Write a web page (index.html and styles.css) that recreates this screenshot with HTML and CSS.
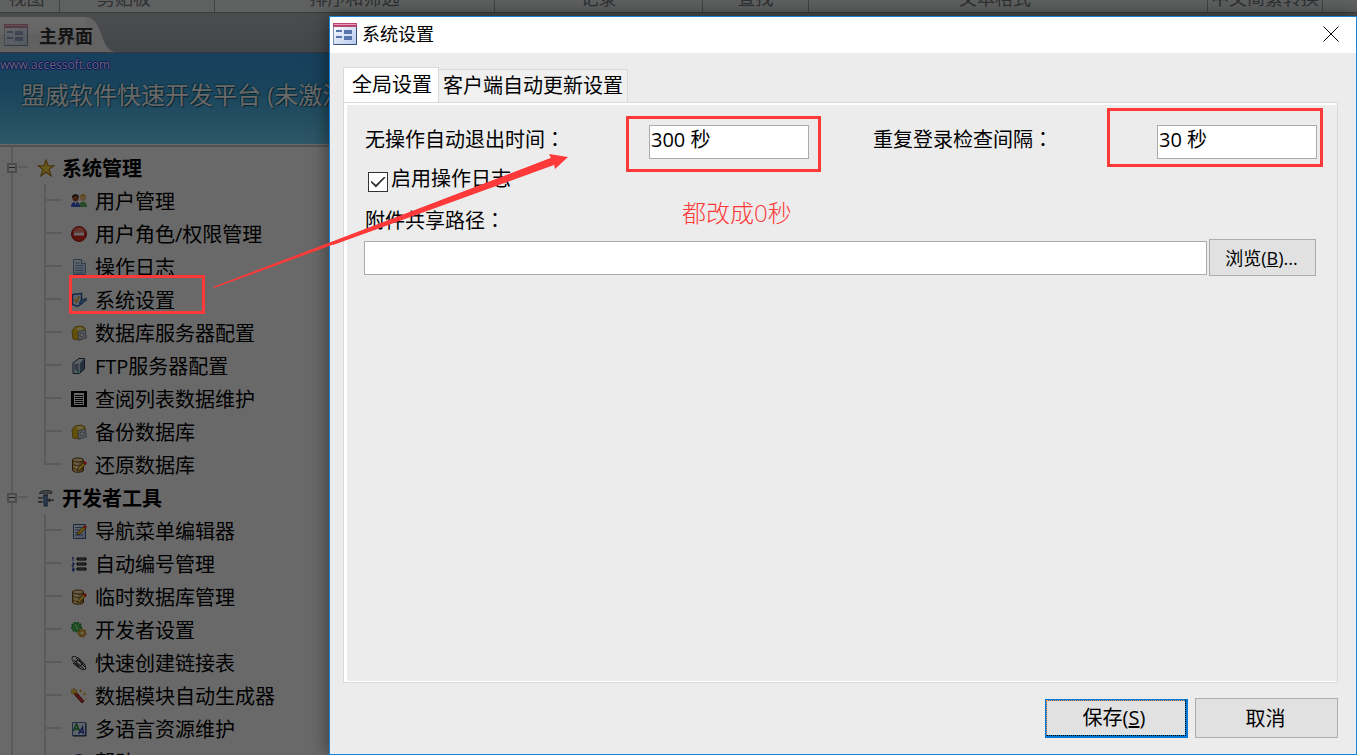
FILE: index.html
```
<!DOCTYPE html>
<html lang="zh-CN">
  <head>
    <meta charset="UTF-8" />
    <title>系统设置</title>
    <link rel="stylesheet" href="styles.css" />
  </head>
  <body>
    <!-- shared icons -->
    <svg class="defs" width="0" height="0" aria-hidden="true">
      <linearGradient id="paper" x1="0" y1="0" x2="1" y2="1">
        <stop offset="0" stop-color="#fff" />
        <stop offset="1" stop-color="#b4c8ee" />
      </linearGradient>
      <linearGradient id="gold" x1="0" y1="0" x2="1" y2="0">
        <stop offset="0" stop-color="#f0c05a" />
        <stop offset="0.4" stop-color="#ffeebb" />
        <stop offset="1" stop-color="#a87020" />
      </linearGradient>
      <symbol id="form" viewBox="0 0 24 22">
        <rect x="0.5" y="0.5" width="23" height="21" fill="url(#paper)" stroke="#7d8fb0" />
        <path d="M0 0h24v4H0z" fill="#b8456f" />
        <path d="M1 1h22v1H1z" fill="#e59ab5" />
        <path d="M23.5 4v17.500H1" fill="none" stroke="#39506f" />
        <path d="M3 8h6M3 14h6" stroke="#5874ad" stroke-width="2" />
        <path d="M12 8h6v2h-6zM12 14h6v2h-6z" fill="#dbe6fb" stroke="#5874ad" stroke-width="2" />
      </symbol>
      <symbol id="backup" viewBox="0 0 16 16">
        <path d="M1 6l3-4 6-1 4 2v9l-5 3-7-1z" fill="#f0c419" stroke="#a9851b" />
        <path d="M4 3l6-1 3 2-5 2z" fill="#fff2a0" />
        <path d="M7 7l7-2 1.500 8-8 2z" fill="#d5dbe2" stroke="#7f8a96" />
        <circle cx="11" cy="10" r="2" fill="#fff" stroke="#7f8a96" />
      </symbol>
      <symbol id="restore" viewBox="0 0 16 16">
        <path d="M1.500 3v10c0 3 11 3 11 0V3z" fill="url(#gold)" stroke="#6b4512" />
        <ellipse cx="7" cy="3" rx="5.500" ry="2" fill="#fbe3a5" stroke="#6b4512" />
        <path d="M2 7c2 2 8 2 10 0M2 11c2 2 8 2 10 0" fill="none" stroke="#8b6427" />
        <path d="M6 14l1-3 6-6 2 2-6 6z" fill="#ffd23c" stroke="#604010" stroke-width="0.700" />
        <path d="M12 6l2-2 2 2-2 2z" fill="#f02020" />
      </symbol>
    </svg>

    <div class="app">
      <div class="ribbon">
        <span class="group view">视图</span>
        <span class="group clipboard">剪贴板</span>
        <span class="group">排序和筛选</span>
        <span class="group">记录</span>
        <span class="group">查找</span>
        <span class="group format">文本格式</span>
        <span class="group">中文简繁转换</span>
        <span class="group"></span>
      </div>

      <div class="doc-tabs">
        <a class="doc-tab" href="#main">
          <svg class="form-icon" width="24" height="24"><use href="#form" /></svg>
          主界面
        </a>
        <svg class="tab-curve" width="30" height="35" viewBox="0 0 30 35">
          <path d="M0 0C18 1 13 34 30 35H0z" />
        </svg>
      </div>

      <div class="banner">
        <a class="site" href="#site">www.accessoft.com</a>
        <h1>盟威软件快速开发平台 (未激活)</h1>
      </div>

      <ul class="tree" id="main">
        <li>
          <div class="root">
            <button class="toggle" aria-label="折叠"></button>
            <svg width="18" height="18" viewBox="0 0 16 16">
              <path d="M8 1l1.800 5H15l-4.200 3.200L12.500 15 8 11.500 3.500 15l1.700-5.800L1 6h5.200z" fill="#ffd84a" stroke="#a8780e" />
            </svg>
            系统管理
          </div>
          <ul>
            <li>
              <a href="#users">
                <svg width="16" height="16" viewBox="0 0 16 16">
                  <circle cx="12" cy="5" r="3" fill="#f5c088" />
                  <path d="M9 4c0-4 6-4 6 0l-1-1h-4z" fill="#e0ac30" />
                  <path d="M8 14c0-7 8-7 8 0z" fill="#5fb45f" />
                  <circle cx="4.500" cy="5" r="3.200" fill="#a5542a" />
                  <path d="M1 5c-1-5 8-5 7 0L6 3H3z" fill="#2a2020" />
                  <path d="M0 14c0-7 9-7 9 0z" fill="#345fd8" />
                  <path d="M3.500 9h2l-1 3z" fill="#fff" />
                </svg>
                用户管理
              </a>
            </li>
            <li>
              <a href="#roles">
                <svg width="16" height="16" viewBox="0 0 16 16">
                  <circle cx="8" cy="8" r="7.500" fill="#e03020" stroke="#9c1a10" />
                  <path d="M2 6c2-6 10-6 12 0z" fill="#f08070" />
                  <rect x="3" y="6.500" width="10" height="3" fill="#fff" />
                </svg>
                用户角色/权限管理
              </a>
            </li>
            <li>
              <a href="#log">
                <svg width="16" height="16" viewBox="0 0 16 16">
                  <path d="M2.500 0.500h8l4 4v11h-12z" fill="url(#paper)" stroke="#6f93bf" />
                  <path d="M10.500 0.500v4h4" fill="#fff" stroke="#6f93bf" />
                  <path d="M4 4h5M4 6.500h8M4 9h8M4 11.500h8M4 14h8" stroke="#6d9bd0" />
                </svg>
                操作日志
              </a>
            </li>
            <li>
              <a href="#settings">
                <svg width="16" height="16" viewBox="0 0 16 16">
                  <path d="M1.500 2.500l9-1v10l-4 3-5-2z" fill="#e3eeff" stroke="#2f63b0" stroke-width="1.500" />
                  <path d="M3.500 7l2 3 3-6" fill="none" stroke="#e4ae20" stroke-width="1.500" />
                  <path d="M8 11l2-3 3-1 2-1 1 2-3 2-2 2z" fill="#5b96d8" stroke="#27466f" stroke-width="0.700" />
                </svg>
                系统设置
              </a>
            </li>
            <li>
              <a href="#dbserver">
                <svg width="16" height="16"><use href="#backup" /></svg>
                数据库服务器配置
              </a>
            </li>
            <li>
              <a href="#ftp">
                <svg width="16" height="16" viewBox="0 0 16 16">
                  <path d="M2 5l6-4.500h5.500V11l-5 4.500H2z" fill="#5e7796" stroke="#273a50" />
                  <path d="M2.500 5H9v10H2.500z" fill="#c4d4e6" />
                  <path d="M2.500 5L8 1h5L9 5z" fill="#dce8f4" />
                  <path d="M3.500 7h4M3.500 9h4M3.500 11h4" stroke="#3c5370" />
                  <path d="M6 13h2" stroke="#2bb54a" stroke-width="2" />
                </svg>
                FTP服务器配置
              </a>
            </li>
            <li>
              <a href="#lists">
                <svg width="16" height="16" viewBox="0 0 16 16">
                  <path d="M0 0h16v16H0z" fill="#000" />
                  <path d="M3 2h10v12H3z" fill="#fff" />
                  <path d="M4 4.500h8M4 6.500h8M4 8.500h8M4 10.500h8M4 12.500h8" stroke="#000" />
                </svg>
                查阅列表数据维护
              </a>
            </li>
            <li>
              <a href="#backup-db">
                <svg width="16" height="16"><use href="#backup" /></svg>
                备份数据库
              </a>
            </li>
            <li>
              <a href="#restore-db">
                <svg width="16" height="16"><use href="#restore" /></svg>
                还原数据库
              </a>
            </li>
          </ul>
        </li>
        <li>
          <div class="root">
            <button class="toggle" aria-label="折叠"></button>
            <svg width="18" height="18" viewBox="0 0 16 16">
              <path d="M2 4c1-3 7-3 11-2v2L9 3.500V6H6.500V3.500z" fill="#b8bec4" stroke="#454b50" stroke-width="0.800" />
              <path d="M1 8h4M1 11.500h4M9 10h6M11 8.500v3" stroke="#545b61" stroke-width="1.500" />
              <path d="M6 6h3v9H6.500z" fill="#7aa2d8" stroke="#33507a" />
            </svg>
            开发者工具
          </div>
          <ul class="open-end">
            <li>
              <a href="#menu-editor">
                <svg width="16" height="16" viewBox="0 0 16 16">
                  <path d="M2.500 1.500h12v14h-12z" fill="url(#paper)" stroke="#3c5f8e" />
                  <path d="M4 4.500h7M4 7h5M4 9.500h3M4 12h8" stroke="#4c80c0" />
                  <path d="M6 12l1-3 6-6 2 2-6 6z" fill="#ffc928" stroke="#5c4010" stroke-width="0.700" />
                  <path d="M12 4l2-2 2 2-2 2z" fill="#e03020" />
                </svg>
                导航菜单编辑器
              </a>
            </li>
            <li>
              <a href="#numbering">
                <svg width="16" height="16" viewBox="0 0 16 16">
                  <path d="M1 2l1-1v4M1 7h2v2H1v1h2M1 12h2v3H1M1 13.500h2" fill="none" stroke="#2438a8" />
                  <path d="M6 2h9v2H6zM6 7h9v2H6zM6 12h9v2H6z" fill="#9aa" stroke="#000" />
                </svg>
                自动编号管理
              </a>
            </li>
            <li>
              <a href="#temp-db">
                <svg width="16" height="16"><use href="#restore" /></svg>
                临时数据库管理
              </a>
            </li>
            <li>
              <a href="#dev-settings">
                <svg width="16" height="16" viewBox="0 0 16 16">
                  <circle cx="5.500" cy="5" r="4.500" fill="#4fc25a" stroke="#2a9a3a" stroke-width="2" stroke-dasharray="2 1" />
                  <circle cx="11" cy="11" r="3.500" fill="#f0b440" stroke="#c08820" stroke-width="2" stroke-dasharray="2 1" />
                  <circle cx="11" cy="11" r="1.200" fill="#fff" />
                  <path d="M4 2l3 6" stroke="#b9f0bd" />
                </svg>
                开发者设置
              </a>
            </li>
            <li>
              <a href="#links">
                <svg width="16" height="16" viewBox="0 0 16 16" fill="none" stroke="#222">
                  <ellipse cx="6" cy="6" rx="6" ry="3" transform="rotate(40 6 6)" />
                  <ellipse cx="10" cy="10" rx="6" ry="3" transform="rotate(45 10 10)" />
                  <path d="M3 5l10 9M5 3l9 9M2 8l6 5" />
                </svg>
                快速创建链接表
              </a>
            </li>
            <li>
              <a href="#generator">
                <svg width="16" height="16" viewBox="0 0 16 16">
                  <path d="M3 6l2-2 8 9-2 2z" fill="#d8382a" stroke="#7a1810" />
                  <path d="M0 2h2l1-2 1 2 2 0-1 2 1 2-3-1-2 1z" fill="#ffd23c" stroke="#a87410" stroke-width="0.500" />
                  <path d="M8 3h3M9.500 1.500v3M12 6h3M13.500 4.500v3M14 11h2" stroke="#e8a820" />
                </svg>
                数据模块自动生成器
              </a>
            </li>
            <li>
              <a href="#languages">
                <svg width="16" height="16" viewBox="0 0 16 16">
                  <path d="M1.500 1.500h13v13h-13z" fill="#eaf2ff" stroke="#5070a8" />
                  <path d="M15 2v13H2" fill="none" stroke="#1c2c58" />
                  <path d="M2.500 10l3-7 3 7M4 8h3" fill="none" stroke="#1f8a3a" stroke-width="1.500" />
                  <path d="M7.500 13l4-7 1 7M9 11h3.500" fill="none" stroke="#2447b8" stroke-width="1.500" />
                </svg>
                多语言资源维护
              </a>
            </li>
            <li>
              <a href="#help">
                <svg width="16" height="16" viewBox="0 0 16 16">
                  <circle cx="8" cy="8" r="7.500" fill="#3f6fe0" stroke="#2444a0" />
                </svg>
                帮助
              </a>
            </li>
          </ul>
        </li>
      </ul>
    </div>

    <div class="backdrop"></div>

    <div class="dialog" role="dialog" aria-labelledby="dialog-title">
      <div class="title-bar">
        <svg class="form-icon" width="24" height="22"><use href="#form" /></svg>
        <h2 id="dialog-title">系统设置</h2>
        <button class="close" aria-label="关闭">
          <svg width="16" height="16" viewBox="0 0 16 16">
            <path d="M0.500 0.500l15 15M15.500 0.500l-15 15" stroke="#000" />
          </svg>
        </button>
      </div>

      <form class="dialog-body" onsubmit="return false">
        <div class="tabs" role="tablist">
          <button type="button" class="tab active" role="tab" aria-selected="true">全局设置</button>
          <button type="button" class="tab" role="tab" aria-selected="false">客户端自动更新设置</button>
        </div>

        <div class="panel" role="tabpanel">
          <div class="fields">
            <div class="field">
              <label for="idle">无操作自动退出时间<span class="colon" lang="zh-TW">：</span></label>
              <input type="text" id="idle" value="300 秒" />
            </div>
            <div class="field">
              <label for="interval">重复登录检查间隔<span class="colon" lang="zh-TW">：</span></label>
              <input type="text" id="interval" value="30 秒" />
            </div>
          </div>
          <div class="check">
            <input type="checkbox" id="logging" checked />
            <label for="logging">启用操作日志</label>
          </div>
          <label class="path-label" for="path">附件共享路径<span class="colon" lang="zh-TW">：</span></label>
          <div class="path">
            <input type="text" id="path" />
            <button type="button" class="btn browse">浏览(<u>B</u>)...</button>
          </div>
        </div>

        <div class="actions">
          <button type="submit" class="btn save"><span>保存(<u>S</u>)</span></button>
          <button type="button" class="btn">取消</button>
        </div>
      </form>
    </div>

    <!-- notes drawn over the windows -->
    <div class="mark mark-menu"></div>
    <div class="mark mark-idle"></div>
    <div class="mark mark-interval"></div>
    <svg class="arrow" width="356" height="136" viewBox="0 0 356 136">
      <path d="M0 133L338 4l-2-4 19 3-13 12-1-5L1 134z" fill="#fd3a39" />
      <path d="M120 88L338 4l3 7L120 91z" fill="#fd3a39" />
    </svg>
    <p class="note">都改成0秒</p>
  </body>
</html>
```

FILE: styles.css
```
* {
  box-sizing: border-box;
}

body {
  margin: 0;
  height: 100vh;
  position: relative;
  overflow: hidden;
  font-family: "Open Sans", "Noto Sans CJK SC", sans-serif;
  font-size: 20px;
  color: #000;
}

button,
input {
  font: inherit;
  color: inherit;
}

a {
  color: inherit;
  text-decoration: none;
}

ul {
  list-style: none;
  margin: 0;
  padding: 0;
}

.defs {
  position: absolute;
}

/* main window */
.app {
  height: 100%;
  overflow: hidden;
  background: #fff;
}

.ribbon {
  display: grid;
  grid-template-columns: 60fr 155fr 280fr 208fr 106fr 399fr 115fr 34fr;
  height: 13px;
  background: #e6e8ea;
  border-bottom: 1px solid #8c9095;
}

.group {
  display: flex;
  align-items: flex-end;
  justify-content: center;
  min-width: 0;
  height: 12px;
  border-right: 1px solid #a0a4a8;
  font-size: 18px;
  line-height: 28px;
  white-space: nowrap;
  color: #73777c;
}

.group:last-child {
  border: none;
}

.view {
  padding-right: 6px;
}

.clipboard,
.format {
  padding-right: 26px;
}

.doc-tabs {
  display: flex;
  align-items: flex-end;
  height: 40px;
  background: linear-gradient(#b4b9be, #a5abb3);
  border-bottom: 1px solid #80858c;
}

.doc-tab {
  display: flex;
  align-items: center;
  gap: 11px;
  width: 86px;
  height: 35px;
  padding-left: 4px;
  background: linear-gradient(#fff, #f4f4f4 50%, #e6e6e6 50%, #eee);
  font-size: 18px;
  font-weight: bold;
  white-space: nowrap;
  color: #333;
}

.doc-tab .form-icon {
  flex: none;
  opacity: 0.6;
}

/* sits under the end of the tab's text */
.tab-curve {
  flex: none;
  fill: #f0f0f0;
}

.doc-tab {
  position: relative;
}

.banner {
  height: 91px;
  background: linear-gradient(#389ae2, #3fa5de 40%, #70d3f8);
}

.site {
  display: block;
  padding-top: 3px;
  font-size: 12px;
  line-height: 17px;
  color: #f4f4ff;
  text-shadow: 1px 0 #2030e0, -1px 0 #2030e0, 0 1px #2030e0, 0 -1px #2030e0;
}

.banner h1 {
  margin: 4px 0 0 21px;
  font-size: 24px;
  line-height: 36px;
  font-weight: normal;
  white-space: nowrap;
  color: #fff;
  text-shadow: 1px 1px 1px #105070, -1px -1px 1px #1a7c98;
}

.tree {
  margin-top: 1px;
  padding-top: 4px;
  border-top: 2px solid #c8c8c8;
  background: linear-gradient(#d7e0e2, #d7e0e2) 11px 0 / 2px 100% no-repeat;
  white-space: nowrap;
}

.root {
  display: flex;
  align-items: center;
  height: 33px;
  padding-left: 7px;
  background: linear-gradient(#d7e0e2, #d7e0e2) 18px 15px / 10px 2px no-repeat;
  font-weight: bold;
}

.root svg {
  flex: none;
  margin: 0 7px 0 20px;
}

.toggle {
  width: 10px;
  height: 10px;
  padding: 0;
  border: 2px solid #bbb;
  background: linear-gradient(#555, #555) center / 6px 1px no-repeat #fff;
}

.tree ul {
  margin-left: 44px;
}

.tree ul li {
  background:
    linear-gradient(#d7e0e2, #d7e0e2) 0 0 / 2px 100% no-repeat,
    linear-gradient(#d7e0e2, #d7e0e2) 0 15px / 18px 2px no-repeat;
}

.tree ul:not(.open-end) li:last-child {
  background-size: 2px 17px, 18px 2px;
}

.tree ul a {
  display: flex;
  align-items: center;
  gap: 8px;
  height: 33px;
  padding-left: 27px;
}

.backdrop {
  position: absolute;
  inset: 0;
  background: rgba(0, 0, 0, 0.59);
}

/* settings dialog */
.dialog {
  position: absolute;
  top: 16px;
  right: 0;
  bottom: 0;
  left: 329px;
  display: flex;
  flex-direction: column;
  border: 1px solid #1883d7;
  background: #ececec;
  box-shadow: 0 0 18px rgba(0, 0, 0, 0.5);
}

.title-bar {
  display: flex;
  align-items: center;
  height: 36px;
  padding: 0 17px 2px 3px;
  background: #fff;
}

.title-bar h2 {
  flex: 1;
  margin: 0 0 0 5px;
  font-size: 18px;
  line-height: 24px;
  font-weight: normal;
}

.close {
  display: flex;
  padding: 0;
  border: none;
  background: none;
}

.dialog-body {
  display: flex;
  flex-direction: column;
  flex: 1;
  padding: 14px 18px 16px 13px;
}

.tabs {
  display: flex;
  align-items: flex-end;
}

.tab {
  height: 33px;
  padding: 0 4px;
  border: 1px solid #d9d9d9;
  border-bottom: none;
  border-left: none;
  background: #f0f0f0;
  line-height: 32px;
}

.tab.active {
  height: 35px;
  padding: 0 6px 0 8px;
  border-left: 1px solid #d9d9d9;
  background: #fff;
}

.panel {
  flex: 1;
  padding: 22px 20px 0 18px;
  border: 1px solid #d9d9d9;
  box-shadow: inset 3px 2px #fff, inset 0 -1px #fff;
}

.fields {
  display: grid;
  grid-template-columns: 1fr 1fr;
  gap: 64px;
  padding-left: 3px;
}

.field {
  display: flex;
  align-items: flex-start;
}

.field label {
  flex: 1;
  line-height: 28px;
}

.colon {
  font-family: "Noto Sans CJK TC", sans-serif;
}

input[type="text"] {
  height: 34px;
  min-width: 0;
  padding: 0 1px 7px;
  border: 1px solid #ababab;
  background: #fff;
}

.field input {
  width: 160px;
}

.check {
  display: flex;
  align-items: center;
  gap: 3px;
  height: 40px;
  padding-left: 6px;
  line-height: 36px;
}

.check label {
  padding-bottom: 1px;
}

.check input {
  appearance: none;
  display: grid;
  place-items: center;
  width: 20px;
  height: 20px;
  margin: 6px 0 0;
  border: 1px solid #333;
  background: #fff;
}

.check input:checked::before {
  content: "";
  width: 15px;
  height: 11px;
  background: #333;
  clip-path: polygon(0 50%, 8% 40%, 36% 76%, 92% 0, 100% 10%, 36% 100%);
}

.path-label {
  display: block;
  height: 40px;
  padding-left: 3px;
  line-height: 42px;
}

.path {
  display: flex;
  align-items: center;
  gap: 2px;
  padding: 0 1px 0 2px;
}

.path input {
  flex: 1;
}

.btn {
  width: 143px;
  height: 40px;
  padding: 0 2px 2px 0;
  border: 1px solid #adadad;
  background: #e1e1e1;
}

.browse {
  width: 107px;
  height: 37px;
  font-size: 18px;
}

.actions {
  display: flex;
  align-items: flex-end;
  justify-content: flex-end;
  gap: 7px;
  margin-top: 15px;
}

.save {
  display: flex;
  height: 39px;
  padding: 0;
  border-color: #0078d7;
  border-width: 1px 2px 2px 1px;
  background: #0078d7;
}

/* keyboard focus ring inside the default button */
.save span {
  flex: 1;
  align-self: stretch;
  padding-right: 4px;
  border: 1px dotted;
  border-color: #ff8728 #000 #000 #ff8728;
  background: #e1e1e1 padding-box;
  line-height: 34px;
}

/* notes */
.mark {
  position: absolute;
  border: 3px solid #fd3a39;
}

.mark-menu {
  top: 275px;
  left: 69px;
  width: 136px;
  height: 39px;
}

.mark-idle {
  top: 116px;
  left: 626px;
  width: 195px;
  height: 56px;
}

.mark-interval {
  top: 108px;
  right: 34px;
  width: 216px;
  height: 59px;
}

.arrow {
  position: absolute;
  top: 154px;
  left: 213px;
}

.note {
  position: absolute;
  top: 196px;
  left: 682px;
  margin: 0;
  font-size: 24px;
  line-height: 34px;
  font-weight: 300;
  color: #fd3a39;
}
```
